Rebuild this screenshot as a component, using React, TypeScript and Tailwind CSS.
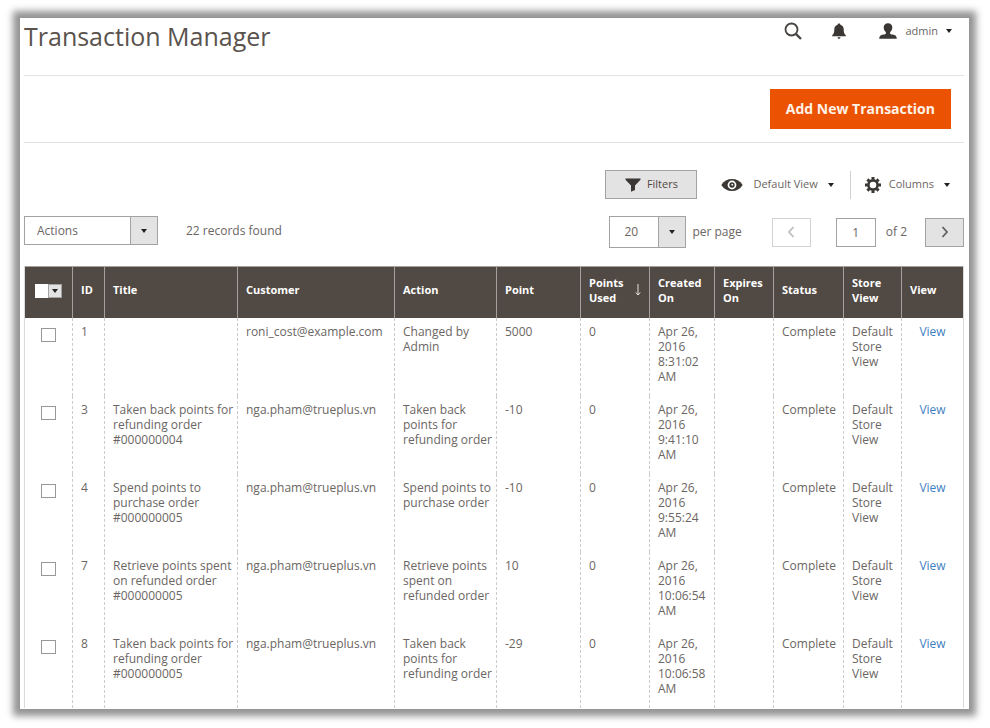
import { useState } from "react";
import type { ReactNode } from "react";

type Row = { id: number; title: string; customer: string; action: string; point: string; created: string };

const rows: Row[] = [
  { id: 1, title: "", customer: "roni_cost@example.com", action: "Changed by Admin", point: "5000", created: "8:31:02" },
  { id: 3, title: "Taken back points for refunding order #000000004", customer: "nga.pham@trueplus.vn", action: "Taken back points for refunding order", point: "-10", created: "9:41:10" },
  { id: 4, title: "Spend points to purchase order #000000005", customer: "nga.pham@trueplus.vn", action: "Spend points to purchase order", point: "-10", created: "9:55:24" },
  { id: 7, title: "Retrieve points spent on refunded order #000000005", customer: "nga.pham@trueplus.vn", action: "Retrieve points spent on refunded order", point: "10", created: "10:06:54" },
  { id: 8, title: "Taken back points for refunding order #000000005", customer: "nga.pham@trueplus.vn", action: "Taken back points for refunding order", point: "-29", created: "10:06:58" },
];

function Caret() {
  return (
    <svg viewBox="0 0 6 4" className="h-1 w-1.5 shrink-0" fill="#222" aria-hidden="true">
      <path d="M0 0h6L3 4z" />
    </svg>
  );
}

function SearchIcon() {
  return (
    <svg viewBox="0 0 18 18" className="h-[18px] w-[18px]" fill="none" stroke="#4a4542" aria-hidden="true">
      <circle cx="7.5" cy="7.5" r="6" strokeWidth="1.8" />
      <path d="M11.8 11.8l5.2 5.2" strokeWidth="2.4" />
    </svg>
  );
}

function BellIcon() {
  return (
    <svg viewBox="0 0 14 16" className="h-4 w-3.5" fill="#3b3735" aria-hidden="true">
      <path d="M7 .5c.8 0 1.3.5 1.4 1.2C10.6 2.3 11.7 4 11.700 6.200c0 3 .5 4.800 2.100 6v1H.2v-1c1.600-1.200 2.100-3 2.100-6 0-2.200 1.100-3.900 3.300-4.500C5.700 1 6.200.5 7 .5zM5.500 14.200h3c0 .9-.6 1.500-1.500 1.500s-1.500-.6-1.500-1.500z" />
    </svg>
  );
}

function UserIcon() {
  return (
    <svg viewBox="0 0 18 16" className="h-4 w-[18px]" fill="#3b3735" aria-hidden="true">
      <path d="M9 .3c2.700 0 4.300 1.700 4.300 4.300 0 1.900-1 3.700-2.200 4.600v1.300c.3.600 1 .8 2.500 1.100 2.900.6 4.100 1.400 4.200 4.100H.2c.1-2.700 1.300-3.500 4.200-4.100 1.500-.3 2.200-.5 2.500-1.100V9.200C5.700 8.300 4.700 6.500 4.700 4.600 4.700 2 6.300.3 9 .3z" />
    </svg>
  );
}

function FunnelIcon() {
  return (
    <svg viewBox="0 0 16 14" className="h-3.5 w-4" fill="#3b3735" aria-hidden="true">
      <path d="M.5.5h15v1.300L10 7.500V12l-4 1.800V7.500L.5 1.800z" />
    </svg>
  );
}

function EyeIcon() {
  return (
    <svg viewBox="0 0 22 14" className="h-3.5 w-[22px]" aria-hidden="true">
      <path d="M.3 7C3 2.900 6.500 1 11 1s8 1.900 10.700 6C19 11.100 15.500 13 11 13S3 11.100.3 7z" fill="#3b3735" />
      <circle cx="11" cy="7" r="4.400" fill="#fff" />
      <circle cx="11" cy="7" r="2.700" fill="#3b3735" />
      <circle cx="11.300" cy="6.700" r="0.900" fill="#fff" />
    </svg>
  );
}

function GearIcon() {
  return (
    <svg viewBox="-8 -8 16 16" className="h-4 w-4" fill="none" stroke="#3b3735" aria-hidden="true">
      <circle r="4.600" strokeWidth="2.600" />
      <path d="M0-5.200V-8M0 5.200V8M-5.200 0H-8M5.200 0H8M3.700-3.700l1.900-1.900M-3.700 3.700l-1.900 1.900M3.700 3.700l1.900 1.900M-3.700-3.700l-1.900-1.900" strokeWidth="3" />
    </svg>
  );
}

function Chevron({ d, color }: { d: string; color: string }) {
  return (
    <svg viewBox="0 0 8 12" className="h-3 w-2" fill="none" stroke={color} strokeWidth="1.8" aria-hidden="true">
      <path d={d} />
    </svg>
  );
}

function Dropdown({ label, value, className }: { label: string; value: string; className: string }) {
  return (
    <div className="relative flex">
      <select aria-label={label} className={`appearance-none border border-[#a5a3a1] bg-white outline-none ${className}`}>
        <option>{value}</option>
      </select>
      <span className="pointer-events-none absolute inset-y-0 right-0 flex w-7 items-center justify-center border border-[#a5a3a1] bg-[#e3e3e3]">
        <Caret />
      </span>
    </div>
  );
}

function Th({ children, last = false }: { children: ReactNode; last?: boolean }) {
  return (
    <th scope="col" className={`h-[52px] border-t border-[#a5a09c] pb-1.5 pl-2 text-left align-middle font-bold ${last ? "" : "border-r"}`}>
      {children}
    </th>
  );
}

function Td({ children, last = false }: { children?: ReactNode; last?: boolean }) {
  return (
    <td className={`h-[78px] pt-1.5 align-top ${last ? "text-center" : "border-r border-dashed border-[#cccccc] pl-2"}`}>
      {children}
    </td>
  );
}

export default function App() {
  const [selected, setSelected] = useState<number[]>([]);
  const toggle = (id: number) =>
    setSelected((s) => (s.includes(id) ? s.filter((x) => x !== id) : [...s, id]));

  return (
    <div className="min-h-screen bg-white px-5 pt-[18px] pb-[18px] font-['Open_Sans','Noto_Sans',sans-serif] text-xs text-[#6b6663]">
      <main className="mr-px overflow-clip bg-white pr-[5px] pb-px pl-1 shadow-[0_0_7px_7px_#949494]">
        <header className="flex h-[58px] items-start justify-between border-b border-[#e3e3e3]">
          <h1 className="text-[25px] leading-9 text-[#5a534e]">Transaction Manager</h1>
          <div className="flex h-[26px] items-center pr-3">
            <button type="button" aria-label="Search"><SearchIcon /></button>
            <button type="button" aria-label="Notifications" className="ml-[30px]"><BellIcon /></button>
            <button type="button" className="ml-[33px] flex items-center text-[11px]">
              <UserIcon />
              <span className="mr-2 ml-2">admin</span>
              <Caret />
            </button>
          </div>
        </header>

        <div className="flex h-[67px] items-center justify-end border-b border-[#e3e3e3] pr-[13px]">
          <button type="button" className="h-10 bg-[#eb5202] px-4 text-sm font-bold text-[#fff3e8]">Add New Transaction</button>
        </div>

        <div className="mt-[27px] flex h-[29px] items-center justify-end text-[11px]">
          <button type="button" className="flex h-[29px] w-[92px] items-center justify-center gap-1.5 border border-[#a5a3a1] bg-[#e3e3e3] text-[#514943]">
            <FunnelIcon />
            Filters
          </button>
          <button type="button" className="ml-6 flex items-center">
            <EyeIcon />
            <span className="mr-2.5 ml-2.5">Default View</span>
            <Caret />
          </button>
          <button type="button" className="ml-4 flex h-7 items-center border-l border-[#d0d0d0] pr-3.5 pl-3.5">
            <GearIcon />
            <span className="mr-2.5 ml-2">Columns</span>
            <Caret />
          </button>
        </div>

        <div className="mt-[17px] flex h-8 items-center justify-between">
          <div className="flex items-center gap-7 pb-[3px]">
            <Dropdown label="Actions" value="Actions" className="h-[29px] w-[134px] pl-3" />
            <span>22 records found</span>
          </div>
          <div className="flex items-center">
            <Dropdown label="Records per page" value="20" className="h-8 w-[77px] pl-3.5" />
            <span className="ml-1.5">per page</span>
            <button type="button" disabled aria-label="Previous page" className="ml-[30px] flex h-[29px] w-[39px] items-center justify-center border border-[#d2d2d2]">
              <Chevron d="M6.500 1L2 6l4.500 5" color="#bdbdbd" />
            </button>
            <input aria-label="Page" defaultValue="1" className="ml-[25px] h-[29px] w-10 border border-[#a5a3a1] text-center outline-none" />
            <span className="ml-2.5">of 2</span>
            <button type="button" aria-label="Next page" className="ml-[18px] flex h-[29px] w-[39px] items-center justify-center border border-[#a5a3a1] bg-[#e3e3e3]">
              <Chevron d="M1.500 1L6 6l-4.500 5" color="#66605c" />
            </button>
          </div>
        </div>

        <table className="mt-[18px] w-full table-fixed border-separate border-spacing-0 border-x border-[#dadada] text-xs leading-[15px]">
          <colgroup>
            <col className="w-12" />
            <col className="w-8" />
            <col className="w-[133px]" />
            <col />
            <col className="w-[102px]" />
            <col className="w-[84px]" />
            <col className="w-[69px]" />
            <col className="w-[65px]" />
            <col className="w-[59px]" />
            <col className="w-[70px]" />
            <col className="w-[58px]" />
            <col className="w-[61px]" />
          </colgroup>
          <thead className="bg-[#514943] text-[11px] text-white">
            <tr>
              <Th>
                <div className="mt-0.5 ml-0.5 flex h-3.5 w-[27px] overflow-hidden bg-white">
                  <input
                    type="checkbox"
                    aria-label="Select all"
                    checked={selected.length === rows.length}
                    onChange={(e) => setSelected(e.target.checked ? rows.map((r) => r.id) : [])}
                    className="h-3.5 w-[13px] appearance-none bg-white checked:bg-[#514943]"
                  />
                  <button type="button" aria-label="Selection options" className="flex h-3.5 w-3.5 items-center justify-center border border-[#a5a3a1] bg-[#e3e3e3]">
                    <Caret />
                  </button>
                </div>
              </Th>
              <Th>ID</Th>
              <Th>Title</Th>
              <Th>Customer</Th>
              <Th>Action</Th>
              <Th>Point</Th>
              <Th>
                <div className="flex items-center justify-between pr-2">
                  <span className="w-10">Points Used</span>
                  <svg viewBox="0 0 6 12" className="h-3 w-1.5" fill="none" stroke="#e8e2dd" aria-label="Sorted descending">
                    <path d="M3 0v11M.8 8.500L3 11l2.200-2.500" />
                  </svg>
                </div>
              </Th>
              <Th>Created On</Th>
              <Th>Expires On</Th>
              <Th>Status</Th>
              <Th>Store View</Th>
              <Th last>View</Th>
            </tr>
          </thead>
          <tbody>
            {rows.map((r) => (
              <tr key={r.id}>
                <Td>
                  <input
                    type="checkbox"
                    aria-label={`Select transaction ${r.id}`}
                    checked={selected.includes(r.id)}
                    onChange={() => toggle(r.id)}
                    className="mt-1 ml-2 block h-3.5 w-[15px] appearance-none border border-[#9a9896] bg-white checked:bg-[#514943]"
                  />
                </Td>
                <Td>{r.id}</Td>
                <Td>{r.title}</Td>
                <Td>{r.customer}</Td>
                <Td>{r.action}</Td>
                <Td>{r.point}</Td>
                <Td>0</Td>
                <Td>{`Apr 26, 2016 ${r.created} AM`}</Td>
                <Td />
                <Td>Complete</Td>
                <Td>Default Store View</Td>
                <Td last><a href="#view" className="text-[#3f7fc1]">View</a></Td>
              </tr>
            ))}
          </tbody>
        </table>
      </main>
    </div>
  );
}
